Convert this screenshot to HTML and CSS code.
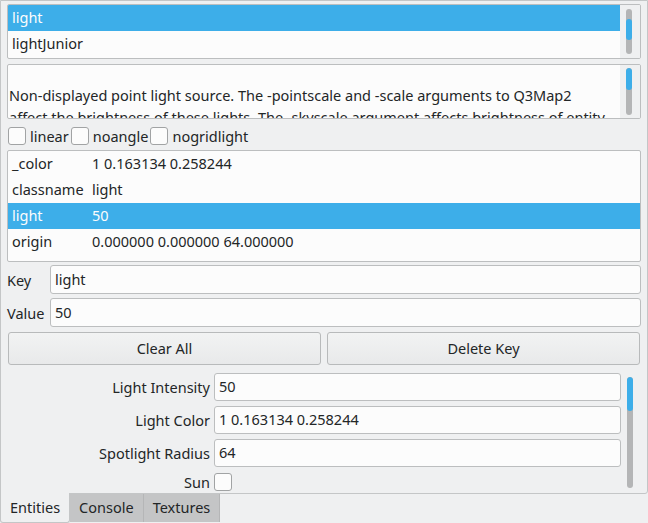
FILE: index.html
```html
<!DOCTYPE html>
<html>
<head>
<meta charset="utf-8">
<link rel="stylesheet" href="styles.css">
</head>
<body>
<div class="pane">
  <div class="box list">
    <div class="rows">
      <div class="row sel">light</div>
      <div class="row">lightJunior</div>
    </div>
    <div class="vbar"><div class="track t1"><div class="thumb th1"></div></div></div>
  </div>
  <div class="box desc">
    <div class="desctext">Non-displayed point light source. The -pointscale and -scale arguments to Q3Map2 affect the brightness of these lights. The -skyscale argument affects brightness of entity lights in the sky.</div>
    <div class="vbar"><div class="track t2"><div class="thumb th2"></div></div></div>
  </div>
  <div class="checks">
    <span class="cb"></span><span class="cblabel">linear</span>
    <span class="cb"></span><span class="cblabel">noangle</span>
    <span class="cb"></span><span class="cblabel">nogridlight</span>
  </div>
  <div class="box table">
    <div class="trow"><span class="k">_color</span><span class="v">1 0.163134 0.258244</span></div>
    <div class="trow"><span class="k">classname</span><span class="v">light</span></div>
    <div class="trow sel"><span class="k">light</span><span class="v">50</span></div>
    <div class="trow"><span class="k">origin</span><span class="v">0.000000 0.000000 64.000000</span></div>
  </div>
  <div class="kv">
    <span class="kvlabel">Key</span><div class="input">light</div>
  </div>
  <div class="kv kv2">
    <span class="kvlabel">Value</span><div class="input">50</div>
  </div>
  <div class="buttons">
    <div class="btn">Clear All</div>
    <div class="btn">Delete Key</div>
  </div>
  <div class="scroll">
    <div class="form">
      <div class="frow"><span class="flabel">Light Intensity</span><div class="input finput">50</div></div>
      <div class="frow"><span class="flabel">Light Color</span><div class="input finput">1 0.163134 0.258244</div></div>
      <div class="frow"><span class="flabel">Spotlight Radius</span><div class="input finput">64</div></div>
      <div class="frow sunrow"><span class="flabel">Sun</span><span class="cb"></span></div>
    </div>
    <div class="vbar sbar"><div class="track t3"><div class="thumb th3"></div></div></div>
  </div>
</div>
<div class="tabs">
  <div class="tab active">Entities</div>
  <div class="tab">Console</div>
  <div class="tab">Textures</div>
</div>
</body>
</html>
```
FILE: styles.css
```css
html, body {
  margin: 0;
  padding: 0;
}
body {
  background: #eff0f1;
  font-family: "Noto Sans", "DejaVu Sans", sans-serif;
  font-size: 14.5px;
  color: #232627;
  width: 648px;
  height: 523px;
  overflow: hidden;
}
.pane {
  box-sizing: border-box;
  width: 648px;
  height: 494px;
  border: 1px solid #c4c6c7;
  border-radius: 0 0 3px 0;
  padding: 3px 6px 0 6px;
  display: flex;
  flex-direction: column;
}
.box {
  box-sizing: border-box;
  border: 1px solid #bcbebf;
  border-radius: 2px;
  background: #fcfcfc;
  overflow: hidden;
}
.list {
  height: 55px;
  margin-bottom: 5px;
  display: flex;
}
.rows {
  flex: 1;
}
.row {
  height: 26px;
  line-height: 25px;
  padding-left: 4px;
}
.sel {
  background: #3daee9;
  color: #fcfcfc;
}
.vbar {
  width: 20px;
  background: #eff0f1;
  position: relative;
}
.track {
  position: absolute;
  left: 6px;
  width: 6px;
  background: #b4b5b6;
  border-radius: 3px;
  overflow: hidden;
}
.thumb {
  position: absolute;
  left: 0;
  width: 6px;
  background: #3daee9;
  border-radius: 3px;
}
.t1 { top: 4px; height: 45px; }
.th1 { top: 10px; height: 21px; }
.desc {
  height: 55px;
  margin-bottom: 5px;
  display: flex;
}
.desctext {
  flex: 1;
  padding: 19px 8px 0 1px;
  line-height: 22px;
  height: 100%;
  box-sizing: border-box;
}
.t2 { top: 3px; height: 47px; }
.th2 { top: 0; height: 22px; }
.checks {
  height: 24px;
  margin-bottom: 2px;
  display: flex;
  align-items: center;
}
.cb {
  box-sizing: border-box;
  width: 18px;
  height: 18px;
  border: 1px solid #a1a3a4;
  border-radius: 3px;
  background: #fcfcfc;
  display: inline-block;
  flex: none;
}
.checks .cb {
  margin-left: 1px;
  margin-right: 4px;
}
.cblabel {
  margin-right: 1px;
}
.table {
  height: 112px;
  margin-bottom: 3px;
}
.trow {
  height: 26px;
  line-height: 25px;
  display: flex;
  padding-left: 4px;
}
.trow .k {
  width: 80px;
}
.kv {
  height: 29px;
  display: flex;
  align-items: center;
  margin-bottom: 4px;
}
.kv2 {
  margin-bottom: 5px;
}
.kvlabel {
  width: 43px;
}
.input {
  box-sizing: border-box;
  height: 29px;
  line-height: 27px;
  border: 1px solid #bcbebf;
  border-radius: 3px;
  background: #fcfcfc;
  padding-left: 4px;
  flex: 1;
}
.buttons {
  display: flex;
  gap: 6px;
  padding: 0 1px;
  height: 33px;
}
.btn {
  flex: 1;
  box-sizing: border-box;
  border: 1px solid #b8babb;
  border-radius: 3px;
  background: linear-gradient(#f2f3f3, #e8e9ea);
  text-align: center;
  line-height: 31px;
}
.scroll {
  margin-top: 5px;
  flex: 1;
  display: flex;
  overflow: hidden;
}
.form {
  flex: 1;
  padding-top: 2px;
}
.frow {
  display: flex;
  align-items: center;
  height: 29px;
  margin-bottom: 4px;
}
.flabel {
  width: 203px;
  text-align: right;
  padding-right: 4px;
  flex: none;
}
.finput {
  height: 28px;
  line-height: 25px;
}
.sunrow {
  height: 22px;
}
.sbar {
  background: transparent;
}
.t3 { top: 7px; height: 111px; }
.th3 { top: 0; height: 34px; }
.tabs {
  display: flex;
  margin-top: -1px;
  height: 30px;
}
.tab {
  box-sizing: border-box;
  height: 28px;
  margin-top: 1px;
  line-height: 26px;
  padding: 0 9px;
  background: #c4c5c6;
  border-right: 1px solid #b5b6b7;
  color: #232627;
}
.tab.active {
  margin-top: 0;
  height: 30px;
  background: #eff0f1;
  border: 1px solid #c4c6c7;
  border-top: none;
  border-radius: 0 0 3px 3px;
  line-height: 29px;
  padding: 0 9px;
}
```
